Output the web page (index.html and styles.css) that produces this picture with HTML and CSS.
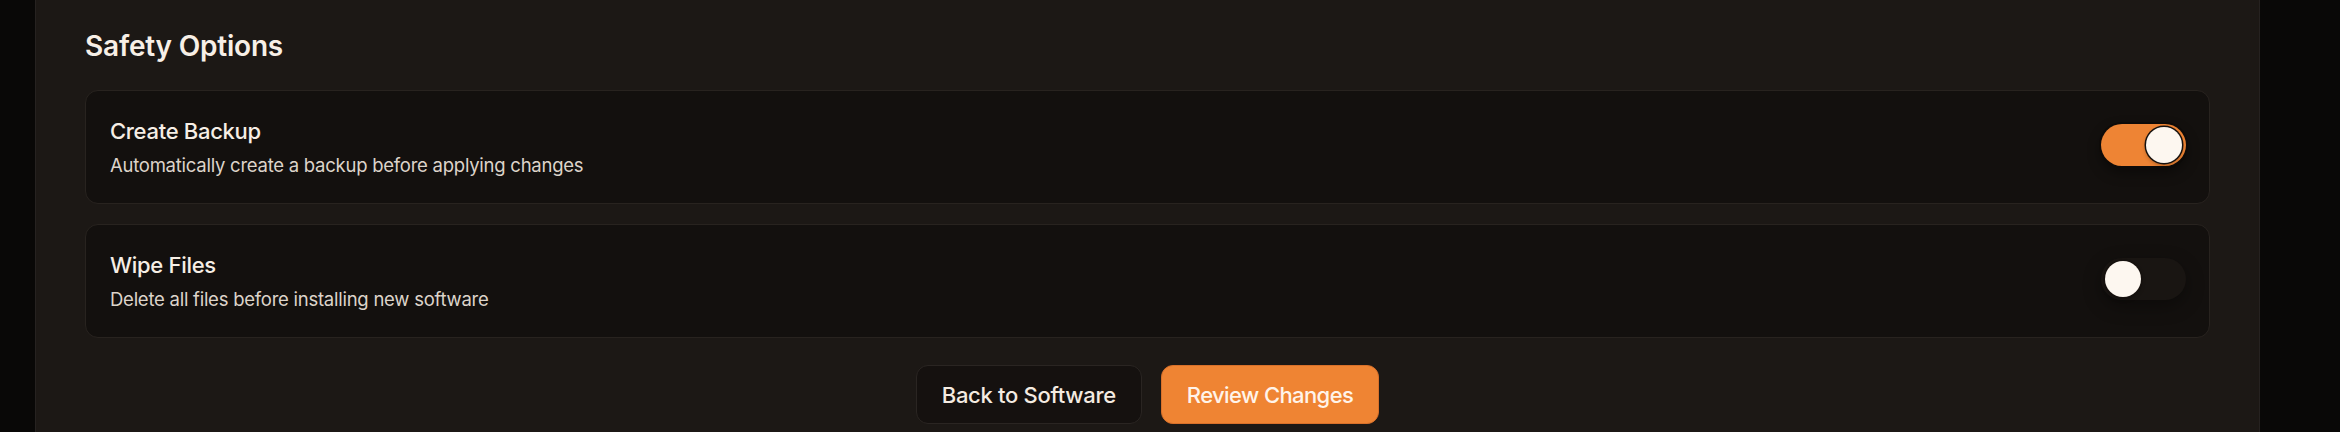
FILE: index.html
```html
<!DOCTYPE html>
<html lang="en">
<head>
<meta charset="utf-8">
<title>Safety Options</title>
<link rel="stylesheet" href="styles.css">
</head>
<body>
<div class="page">
  <section class="panel">
    <h2 class="title">Safety Options</h2>
    <div class="options">
      <div class="option">
        <div class="option-text">
          <div class="option-label">Create Backup</div>
          <div class="option-desc">Automatically create a backup before applying changes</div>
        </div>
        <div class="toggle toggle-on"><span class="knob"></span></div>
      </div>
      <div class="option">
        <div class="option-text">
          <div class="option-label">Wipe Files</div>
          <div class="option-desc">Delete all files before installing new software</div>
        </div>
        <div class="toggle toggle-off"><span class="knob"></span></div>
      </div>
    </div>
    <div class="actions">
      <button class="btn btn-secondary">Back to Software</button>
      <button class="btn btn-primary">Review Changes</button>
    </div>
  </section>
</div>
</body>
</html>
```
FILE: styles.css
```css
* { box-sizing: border-box; }
html, body {
  margin: 0;
  padding: 0;
  background: #090807;
  height: 432px;
  overflow: hidden;
}
body {
  font-family: Inter, "Noto Sans", sans-serif;
  color: #f6eee5;
}
.page {
  display: flex;
  padding: 0 80px 0 35px;
}
.panel {
  flex: 1;
  background: #1c1815;
  border-left: 1px solid #262220;
  border-right: 1px solid #262220;
  padding: 26px 49px 0 49px;
  height: 432px;
}
.title {
  margin: 0 0 24px 0;
  font-size: 28px;
  line-height: 40px;
  font-weight: 600;
  letter-spacing: -0.2px;
  color: #f7efe6;
}
.options {
  display: flex;
  flex-direction: column;
  gap: 20px;
}
.option {
  display: flex;
  align-items: center;
  justify-content: space-between;
  background: #13100e;
  border: 1px solid #28231f;
  border-radius: 13px;
  padding: 24.5px 23px 24.5px 24px;
}
.option-text {
  display: flex;
  flex-direction: column;
  gap: 6px;
}
.option-label {
  font-size: 22px;
  line-height: 30px;
  font-weight: 500;
  color: #f6eee5;
  letter-spacing: -0.3px;
}
.option-desc {
  font-size: 18.5px;
  line-height: 27px;
  color: #ddd4ca;
  letter-spacing: -0.25px;
}
.toggle {
  width: 85px;
  height: 42px;
  border-radius: 21px;
  padding: 3px 4px;
  display: flex;
  align-items: center;
  margin-top: -4px;
}
.toggle-on {
  background: #ee8434;
  justify-content: flex-end;
  box-shadow: 0 0 0 2px #0e0b09, 0 6px 14px rgba(0,0,0,0.45);
}
.toggle-off {
  background: #191512;
  justify-content: flex-start;
  box-shadow: 0 6px 18px rgba(0,0,0,0.35);
}
.knob {
  width: 36px;
  height: 36px;
  border-radius: 50%;
  background: #fdf7f0;
  box-shadow: 0 0 0 1.5px #16110e, 0 2px 4px rgba(0,0,0,0.35);
}
.actions {
  display: flex;
  justify-content: center;
  gap: 19px;
  margin-top: 27px;
}
.btn {
  height: 59px;
  border-radius: 12px;
  font-family: Inter, "Noto Sans", sans-serif;
  font-size: 22px;
  font-weight: 500;
  padding: 0 25px;
  letter-spacing: -0.3px;
  cursor: pointer;
}
.btn-secondary {
  background: #15110f;
  border: 1px solid #2a2522;
  color: #f4ebe1;
}
.btn-primary {
  background: #ef8433;
  border: 1px solid #d8702a;
  color: #fff4ea;
  letter-spacing: -0.6px;
}
```
